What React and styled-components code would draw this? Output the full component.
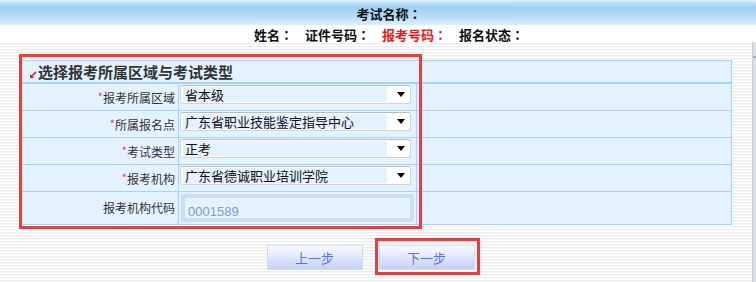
import React from 'react'
import styled, { createGlobalStyle } from 'styled-components'

const GlobalStyle = createGlobalStyle`
  html, body {
    margin: 0;
    padding: 0;
    background: #ffffff;
  }
  body {
    font-family: "Noto Sans CJK SC", "Liberation Sans", sans-serif;
    font-size: 12px;
    color: #333;
  }
`;

const rows = [
  { label: '报考所属区域', value: '省本级' },
  { label: '所属报名点', value: '广东省职业技能鉴定指导中心' },
  { label: '考试类型', value: '正考' },
  { label: '报考机构', value: '广东省德诚职业培训学院' },
]

const Arrow = () => (
  <svg width="8" height="8" viewBox="0 0 8 8">
    <path d="M7 1 L2.5 5.5" stroke="#d0203a" strokeWidth="1.6" fill="none" />
    <path d="M1 3 L1 7 L5 7 Z" fill="#d0203a" />
  </svg>
)

const App = () => {
  return (
    <Page>
      <GlobalStyle />
      <Header>考试名称<Colon>：</Colon></Header>
      <InfoBar>
        <Info>姓名<Colon>：</Colon></Info>
        <Info>证件号码<Colon>：</Colon></Info>
        <Info $red>报考号码<Colon>：</Colon></Info>
        <Info>报名状态<Colon>：</Colon></Info>
      </InfoBar>
      <Body>
        <Content>
          <TableWrap>
            <Table>
              <colgroup>
                <col style={{ width: 157 }} />
                <col style={{ width: 238 }} />
                <col />
              </colgroup>
              <tbody>
                <tr>
                  <TitleCell colSpan={3}>
                    <Arrow />
                    <span>选择报考所属区域与考试类型</span>
                  </TitleCell>
                </tr>
                {rows.map((r) => (
                  <tr key={r.label}>
                    <LabelCell>
                      <Star>*</Star>
                      {r.label}
                    </LabelCell>
                    <FieldCell>
                      <SelectBox>
                        <SelectValue>{r.value}</SelectValue>
                        <Caret />
                      </SelectBox>
                    </FieldCell>
                    <Cell />
                  </tr>
                ))}
                <tr>
                  <LabelCell $tall>报考机构代码</LabelCell>
                  <FieldCell $tall>
                    <CodeInput readOnly value="0001589" />
                  </FieldCell>
                  <Cell $tall />
                </tr>
              </tbody>
            </Table>
            <Highlight />
          </TableWrap>
          <Buttons>
            <Button>上一步</Button>
            <ButtonWrap>
              <Button>下一步</Button>
              <ButtonHighlight />
            </ButtonWrap>
          </Buttons>
        </Content>
        <Scrollbar>
          <ScrollArrow />
        </Scrollbar>
      </Body>
    </Page>
  )
}

const Page = styled.div`
  width: 756px;
  height: 282px;
  display: flex;
  flex-direction: column;
  overflow: hidden;
`;
const Header = styled.div`
  height: 25px;
  background: linear-gradient(#e2f1fc 0%, #b9def7 12%, #9fd0f2 30%, #b6dbf6 65%, #dbeefb 100%);
  display: flex;
  align-items: center;
  justify-content: center;
  padding-left: 22px;
  padding-top: 1px;
  box-sizing: border-box;
  font-size: 13px;
  font-weight: bold;
  color: #111;
`;
const Colon = styled.span`
  font-family: "Noto Sans CJK JP", sans-serif;
`;
const InfoBar = styled.div`
  height: 15px;
  display: flex;
  align-items: center;
  justify-content: center;
  gap: 12px;
  padding-left: 22px;
  padding-top: 2px;
  font-size: 13px;
  font-weight: bold;
`;
const Info = styled.span`
  color: ${(p) => (p.$red ? '#f21818' : '#111')};
  line-height: 13px;
`;
const Body = styled.div`
  flex: 1;
  display: flex;
  background: repeating-linear-gradient(#ffffff 0px, #ffffff 1px, #eceeed 1px, #eceeed 2px, #f8f8f8 2px, #f8f8f8 3px);
`;
const Content = styled.div`
  flex: 1;
  padding: 18px 20px 0 21px;
`;
const Scrollbar = styled.div`
  width: 4px;
  background: #dcdfe4;
  border-left: 1px solid #c9ccd1;
  box-sizing: border-box;
  padding-top: 14px;
`;
const ScrollArrow = styled.div`
  height: 2px;
  background: #aab0b8;
`;
const TableWrap = styled.div`
  position: relative;
`;
const Table = styled.table`
  width: 711px;
  border-collapse: collapse;
  background: #e3f2fe;
  table-layout: fixed;
  td {
    border: 1px solid #a3d4fa;
    padding: 0;
  }
`;
const TitleCell = styled.td`
  height: 21px;
  line-height: 20px;
  border-bottom: 2px solid #a3d4fa !important;
  padding-left: 7px !important;
  font-size: 15px;
  font-weight: bold;
  color: #333;
  white-space: nowrap;
  svg {
    vertical-align: -1px;
    margin-right: 1px;
  }
`;
const Cell = styled.td`
  height: ${(p) => (p.$tall ? '32px' : '25px')};
  line-height: 16px;
`;
const LabelCell = styled(Cell)`
  text-align: right;
  padding-right: 3px !important;
  font-size: 12px;
  color: #333;
  white-space: nowrap;
  vertical-align: middle;
`;
const Star = styled.span`
  color: #e23a6e;
  font-size: 11px;
  vertical-align: 2px;
`;
const FieldCell = styled(Cell)`
  padding-left: 1px !important;
  vertical-align: ${(p) => (p.$tall ? 'middle' : 'top')};
  padding-top: ${(p) => (p.$tall ? '0' : '1px')} !important;
`;
const SelectBox = styled.div`
  width: 231px;
  height: 19px;
  box-sizing: border-box;
  background: #fff;
  border: 1px solid #d4d4d4;
  border-top-color: #bcbcbc;
  border-radius: 3px;
  display: flex;
  align-items: center;
  padding: 1px 5px 1px 2px;
`;
const SelectValue = styled.div`
  flex: 1;
  height: 15px;
  background: #e3f2fe;
  font-size: 13px;
  line-height: 15px;
  color: #111;
  padding-left: 2px;
  white-space: nowrap;
  margin-right: 10px;
`;
const Caret = styled.div`
  width: 0;
  height: 0;
  border-left: 4px solid transparent;
  border-right: 4px solid transparent;
  border-top: 5px solid #000;
`;
const CodeInput = styled.input`
  width: 233px;
  height: 28px;
  box-sizing: border-box;
  margin-left: 1px;
  border: 4px solid #cfdeed;
  background: #e3f2fe;
  color: #7f9dc0;
  font-family: "Liberation Sans", sans-serif;
  font-size: 13px;
  padding: 6px 0 0 3px;
  outline: none;
  display: block;
`;
const Highlight = styled.div`
  position: absolute;
  left: -2px;
  top: -6px;
  width: 403px;
  height: 175px;
  border: 3px solid #f23a3a;
  box-sizing: border-box;
  pointer-events: none;
`;
const Buttons = styled.div`
  display: flex;
  justify-content: center;
  gap: 16px;
  margin-top: 20px;
  padding-right: 12px;
`;
const ButtonWrap = styled.div`
  position: relative;
`;
const Button = styled.button`
  width: 96px;
  height: 25px;
  border: 1px solid #d3d9e6;
  border-top-color: #e4e8f0;
  background: linear-gradient(#f9fbff 0%, #e2e8fd 45%, #c4d0fb 100%);
  color: #5a78cc;
  font-family: "Noto Sans CJK SC", sans-serif;
  font-size: 13px;
  padding: 0;
  cursor: pointer;
`;
const ButtonHighlight = styled.div`
  position: absolute;
  left: -4px;
  top: -7px;
  width: 105px;
  height: 37px;
  border: 3px solid #f23a3a;
  box-sizing: border-box;
  pointer-events: none;
`;

export default App
